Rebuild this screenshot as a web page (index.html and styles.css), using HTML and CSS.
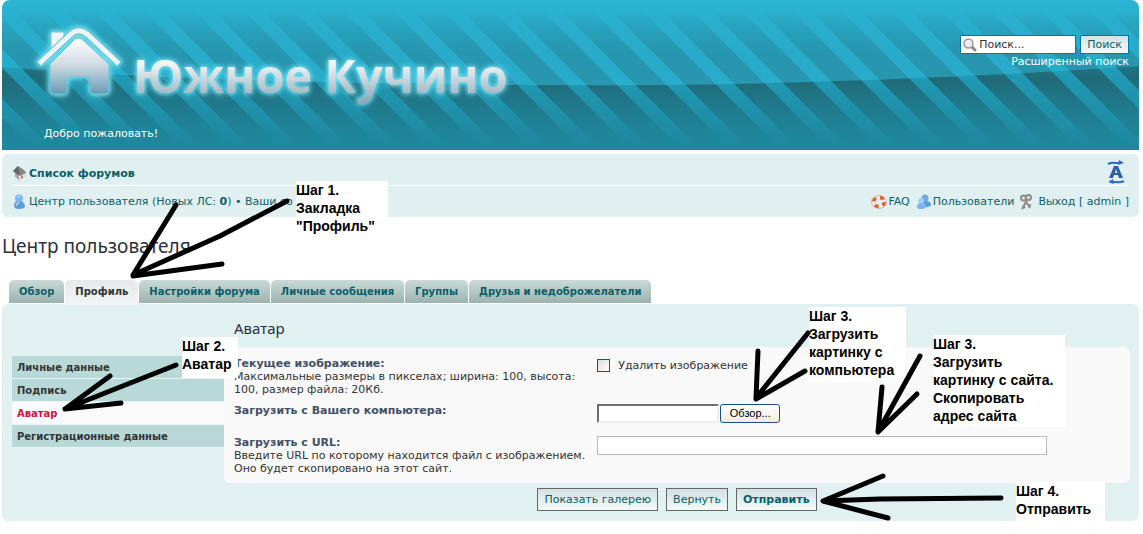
FILE: index.html
```html
<!DOCTYPE html>
<html lang="ru">
<head>
<meta charset="utf-8">
<title>Центр пользователя</title>
<link rel="stylesheet" href="styles.css">
</head>
<body>
<div class="page">
  <header class="header">
    <svg class="header-art" width="100%" height="150" aria-hidden="true">
      <defs>
        <linearGradient id="stripeFade" x1="0" y1="0" x2="0" y2="1">
          <stop offset="0.07" stop-color="#fff" stop-opacity="0"/>
          <stop offset="0.53" stop-color="#fff" stop-opacity="1"/>
          <stop offset="0.96" stop-color="#fff" stop-opacity="0"/>
        </linearGradient>
        <linearGradient id="gloss" x1="0" y1="0" x2="0" y2="1">
          <stop offset="0" stop-color="#2fb8d8" stop-opacity="0.1"/>
          <stop offset="1" stop-color="#2fbfe2" stop-opacity="0.55"/>
        </linearGradient>
        <mask id="fade"><rect width="100%" height="150" fill="url(#stripeFade)"/></mask>
        <pattern id="stripes" width="49.8" height="150" patternUnits="userSpaceOnUse" patternTransform="skewX(45)">
          <rect x="1" width="31" height="150" fill="#205f69"/>
        </pattern>
      </defs>
      <g mask="url(#fade)"><rect width="100%" height="150" fill="url(#stripes)" opacity="0.8"/></g>
      <svg width="100%" height="90" viewBox="0 0 1137 90" preserveAspectRatio="none">
        <path d="M0 0H1137V66C900 82 700 86 560 85C340 84 160 80 0 67Z" fill="url(#gloss)"/>
      </svg>
    </svg>
    <div class="brand">
      <div class="logo">
        <svg class="logo-house" width="86" height="76" viewBox="0 0 86 76" aria-hidden="true">
          <defs>
            <linearGradient id="silver" x1="0" y1="0" x2="0" y2="1">
              <stop offset="0" stop-color="#fff"/><stop offset="0.45" stop-color="#d3dde5"/><stop offset="1" stop-color="#6a9ab6"/>
            </linearGradient>
          </defs>
          <path d="M15 8H28V17L15 29Z" fill="#f3f6f8" stroke="#62c4cf"/>
          <path d="M5 38L34 11Q42 3 51 10L81 38" fill="none" stroke="#62c4cf" stroke-width="7" stroke-linecap="square"/>
          <path d="M5 38L34 11Q42 3 51 10L81 38" fill="none" stroke="#eef3f6" stroke-width="5" stroke-linecap="square"/>
          <path d="M42 14Q45 14 48 17L73 40V66Q73 70 69 70H58Q54 70 54 67V56Q54 53 51 53H35Q31 53 31 56V67Q31 70 28 70H18Q14 70 14 66V40L37 17Q39 14 42 14Z" fill="url(#silver)" stroke="#62c4cf"/>
        </svg>
        <h1 class="logo-text">Южное Кучино</h1>
      </div>
      <p class="welcome">Добро пожаловать!</p>
    </div>
    <form class="search">
      <div class="search-row">
        <label class="search-field">
          <svg width="14" height="14" viewBox="0 0 14 14" aria-hidden="true"><path d="M8 8L12 12" stroke="#888" stroke-width="3" stroke-linecap="round"/><circle cx="5.500" cy="5.500" r="4.500" fill="#e8eef4" stroke="#999" stroke-width="1.500"/><path d="M3 5Q3.500 3 5.500 3" fill="none" stroke="#fff"/></svg>
          <input type="text" value="Поиск..." aria-label="Поиск">
        </label>
        <button type="button" class="search-button">Поиск</button>
      </div>
      <a href="#" class="advanced">Расширенный поиск</a>
    </form>
  </header>

  <nav class="navbar">
    <div class="nav-row nav-top">
      <a href="#" class="crumb">
        <svg width="16" height="16" viewBox="0 0 16 16" aria-hidden="true"><path d="M3 6L7 10V15L3 12Z" fill="#aaa"/><path d="M7 10L13 6V11L7 15Z" fill="#f1f1f1" stroke="#aaa" stroke-width=".5"/><path d="M1 6L6 1L12 5L14 8L8 11Z" fill="#888"/><path d="M1 6L6 1L8 8L6 10Z" fill="#666"/><path d="M9 11L11 10V13L9 14Z" fill="#d07a50"/></svg>
        Список форумов</a>
      <a href="#" class="font-size" aria-label="Изменить размер шрифта">
        <svg width="18" height="24" viewBox="0 0 18 24" aria-hidden="true"><g fill="none" stroke="#2c6cc0" stroke-width="2"><path d="M1 4Q5 2 9 3H14"/><path d="M17 21Q13 23 9 22H4"/></g><path d="M12 0L17 3L11 5ZM6 19L1 22L7 24Z" fill="#2c6cc0"/><path d="M2 18L7 6H11L16 18H12L11 15H7L6 18ZM8 13H10.500L9 9Z" fill="#2d5fa8" fill-rule="evenodd"/></svg>
      </a>
    </div>
    <div class="nav-row nav-bottom">
      <div class="nav-links">
        <a href="#"><svg width="16" height="16" viewBox="0 0 16 16" aria-hidden="true"><path d="M2 12Q2 7 7 7Q12 7 13 12Q13 15 7 15Q2 15 2 12Z" fill="#5b9be0"/><circle cx="7" cy="4.500" r="4" fill="#7db5ee"/><path d="M5 4Q6 2 8 2M4 12Q4 9 7 9" stroke="#d8ebff" fill="none"/></svg>Центр пользователя</a>
        <span>&nbsp;(Новых ЛС: <b>0</b>) • <a href="#">Ваши со</a></span>
      </div>
      <div class="nav-links nav-right">
        <a href="#"><svg width="16" height="16" viewBox="0 0 16 16" aria-hidden="true"><ellipse cx="8" cy="8" rx="5.500" ry="4.500" fill="none" stroke="#f7f1ea" stroke-width="4"/><ellipse cx="8" cy="8" rx="5.500" ry="4.500" fill="none" stroke="#e0603c" stroke-width="3.500" stroke-dasharray="4 4"/><ellipse cx="8" cy="8" rx="7.400" ry="6.400" fill="none" stroke="#c98468" stroke-width=".6"/></svg>FAQ</a>
        <a href="#"><svg width="16" height="16" viewBox="0 0 16 16" aria-hidden="true"><circle cx="9" cy="4" r="3.500" fill="#6ea9e8"/><path d="M6 11Q6 7 10 7Q15 7 15 11Q14 13 10 13Q6 13 6 11Z" fill="#5b9be0"/><circle cx="5" cy="7" r="3" fill="#a5cdf6"/><path d="M1 13Q1 9 5 9Q10 9 10 13Q9 15 5 15Q1 15 1 13Z" fill="#7db5ee"/></svg>Пользователи</a>
        <a href="#" class="logout"><svg width="12" height="16" viewBox="2 0 12 16" aria-hidden="true"><g fill="none" stroke="#8d8a80" stroke-width="2"><circle cx="5.500" cy="4" r="2.500"/><circle cx="10.500" cy="3.500" r="2.500"/><path d="M9 6L4 15M7 6L12 14M5 12L7 14M10 12L13 11"/></g></svg>Выход [ admin ]</a>
      </div>
    </div>
  </nav>

  <h2 class="title">Центр пользователя</h2>

  <nav class="tabs">
    <a href="#">Обзор</a>
    <a href="#" class="active">Профиль</a>
    <a href="#">Настройки форума</a>
    <a href="#">Личные сообщения</a>
    <a href="#">Группы</a>
    <a href="#">Друзья и недоброжелатели</a>
  </nav>

  <div class="panel">
    <nav class="menu">
      <a href="#">Личные данные</a>
      <a href="#">Подпись</a>
      <a href="#" class="active">Аватар</a>
      <a href="#">Регистрационные данные</a>
    </nav>
    <form class="main">
      <h3 class="subtitle">Аватар</h3>
      <div class="fields">
        <div class="field">
          <div><b>Текущее изображение:</b><br>Максимальные размеры в пикселах; ширина: 100, высота:<br>100, размер файла: 20Кб.</div>
          <label class="check"><input type="checkbox">Удалить изображение</label>
        </div>
        <div class="field field-upload">
          <label for="file"><b>Загрузить с Вашего компьютера:</b></label>
          <div class="upload"><input type="text" id="file" class="file-path"><button type="button" class="browse">Обзор...</button></div>
        </div>
        <div class="field">
          <label for="url"><b>Загрузить с URL:</b><br>Введите URL по которому находится файл с изображением.<br>Оно будет скопировано на этот сайт.</label>
          <input type="text" id="url" class="url">
        </div>
      </div>
      <div class="actions">
        <button type="button">Показать галерею</button>
        <button type="reset">Вернуть</button>
        <button type="submit" class="primary">Отправить</button>
      </div>
    </form>
  </div>

  <p class="note note-1">Шаг 1.<br>Закладка<br>"Профиль"</p>
  <p class="note note-2">Шаг 2.<br>Аватар</p>
  <p class="note note-3">Шаг 3.<br>Загрузить<br>картинку с<br>компьютера</p>
  <p class="note note-4">Шаг 3.<br>Загрузить<br>картинку с сайта.<br>Скопировать<br>адрес сайта</p>
  <p class="note note-5">Шаг 4.<br>Отправить</p>
  <svg class="arrows" width="1143" height="534" viewBox="0 0 1143 534" aria-hidden="true">
    <path d="M287 201L220 236L133 275L176 205M133 276L222 264"/>
    <path d="M176 365L110 391L65 409L110 376M65 409L121 403"/>
    <path d="M808 333L756 398L758 351M756 399L805 371"/>
    <path d="M920 356L878 432L882 387M878 432L917 394"/>
    <path d="M1001 498L880 499L823 501L883 476M823 501L888 518"/>
  </svg>
</div>
</body>
</html>
```

FILE: styles.css
```css
* { box-sizing: border-box; }
body {
  margin: 0;
  background: #fff;
  color: #333;
  font: 11px/13px "DejaVu Sans", Verdana, sans-serif;
}
h1, h2, h3, p { margin: 0; }
a { color: #0b5f6b; text-decoration: none; }
input, button { font: inherit; margin: 0; border-radius: 0; }
.page { position: relative; padding: 0 4px 14px 2px; }

.header {
  position: relative;
  display: flex;
  justify-content: space-between;
  height: 150px;
  padding: 0 10px 0 34px;
  border-radius: 8px 8px 0 0;
  background: linear-gradient(#2bb4d3, #2199b4 50%, #1e879e);
  overflow: hidden;
}
.header-art { position: absolute; inset: 0; }
.brand { position: relative; padding-top: 24px; }
.logo { display: flex; height: 103px; gap: 11px; filter: drop-shadow(0 0 2px #7ee6f5) drop-shadow(0 0 3px #5fd3e8); }
.logo-text {
  padding-top: 16px;
  font: bold 47px/70px "Open Sans", sans-serif;
  color: transparent;
  background: linear-gradient(#fff 40%, #8fa9b8 90%);
  background-clip: text;
  -webkit-background-clip: text;
  height: 86px;
  white-space: nowrap;
}
.welcome { padding-left: 8px; color: #fff; }
.search { position: relative; padding-top: 35px; text-align: right; }
.search-row { display: flex; gap: 4px; margin-bottom: 1px; }
.search-field {
  display: flex;
  align-items: center;
  gap: 2px;
  width: 116px;
  height: 19px;
  padding: 0 2px;
  border: 1px solid #0075a8;
  background: #fff;
}
.search-field input { width: 90px; padding: 0; border: 0; background: none; color: #333; }
.search-button { height: 19px; padding: 0 6px; border: 1px solid #0075a8; background: linear-gradient(#d2e2e4, #f4fafa); color: #0b5f6b; }
.advanced { color: #fff; }

.navbar { margin-top: 4px; padding: 0 10px; border-radius: 6px; background: #e0eff0; }
.nav-row { display: flex; justify-content: space-between; align-items: center; }
.nav-top { height: 32px; padding-top: 5px; border-bottom: 1px solid #fff; }
.nav-bottom { height: 31px; }
.crumb, .nav-links, .nav-links a { display: flex; align-items: center; }
.crumb, .nav-links a { gap: 1px; }
.crumb { padding-top: 2px; font-weight: bold; }
.nav-links { white-space: nowrap; color: #0b5f6b; }
.nav-links span a { display: inline; }
.nav-right { gap: 6px; }
.nav-right .logout { gap: 6px; }
.font-size { display: flex; padding-right: 4px; }

.title { padding: 19px 0 23px; color: #28313f; font: 19px/21px "Noto Sans", sans-serif; }

.tabs { display: flex; gap: 1px; height: 24px; padding-left: 7px; align-items: flex-start; }
.tabs a {
  height: 23px;
  padding: 0 10px;
  border-radius: 5px 5px 0 0;
  background: linear-gradient(#c9dad7, #9cb3af);
  font-weight: bold;
  font-size: 10px;
  line-height: 24px;
  white-space: nowrap;
}
.tabs .active { height: 25px; background: linear-gradient(#e6e9e9, #f1f5f5); color: #333; }

.panel { display: flex; padding: 0 9px 10px 10px; border-radius: 6px; background: #e1f1f1; }
.menu { width: 212px; padding-top: 52px; }
.menu a {
  display: block;
  height: 23px;
  padding-left: 5px;
  border-bottom: 1px solid #e8f5f5;
  background: #b9d9d8;
  color: #333;
  font-weight: bold;
  font-size: 10px;
  line-height: 23px;
}
.menu .active { background: #fafafa; color: #d31141; }
.main { flex: 1; }
.subtitle { padding: 14px 10px 9px; color: #28313f; font: 15px/20px "Noto Sans", sans-serif; }
.fields { display: grid; gap: 8px; padding: 10px 10px 8px; border-radius: 6px; background: #f9f9f9; white-space: nowrap; }
.field { display: grid; grid-template-columns: 41% 1fr; align-items: start; color: #333; }
.field b { color: #425067; }
.field-upload { min-height: 24px; }
.check { display: flex; align-items: center; gap: 8px; padding-top: 2px; }
.check input { appearance: none; width: 13px; height: 13px; border: 1px solid #1c5180; background: linear-gradient(135deg, #dcdcd7, #fff); }
.upload { display: flex; gap: 1px; }
.file-path { width: 122px; height: 19px; border: 2px solid; border-color: #6e6e6e #eee #eee #6e6e6e; background: #fff; }
.browse { height: 19px; width: 60px; padding: 0; border: 1px solid #1c4f80; border-radius: 3px; background: linear-gradient(#fff, #efede4); color: #000; font: 11px/13px "Liberation Sans", sans-serif; }
.url { width: 450px; height: 19px; border: 1px solid #b4bac0; background: #fff; }
.actions { display: flex; justify-content: center; gap: 8px; padding-top: 5px; }
.actions button { height: 23px; padding: 0 6px; border: 1px solid #666; background: linear-gradient(#d2e0e0, #f3f9f9); color: #0b5f6b; }
.actions .primary { font-weight: bold; }

.note { position: absolute; background: #fff; color: #000; font: bold 14px/18px "Liberation Sans", sans-serif; white-space: nowrap; }
.note-1 { left: 296px; top: 181px; width: 92px; }
.note-2 { left: 182px; top: 337px; width: 56px; height: 41px; }
.note-3 { left: 809px; top: 307px; width: 97px; height: 76px; }
.note-4 { left: 933px; top: 335px; width: 132px; height: 92px; }
.note-5 { left: 1016px; top: 482px; width: 89px; height: 39px; }
.arrows { position: absolute; left: 0; top: 0; fill: none; stroke: #000; stroke-width: 5; stroke-linecap: round; stroke-linejoin: round; pointer-events: none; }
```
